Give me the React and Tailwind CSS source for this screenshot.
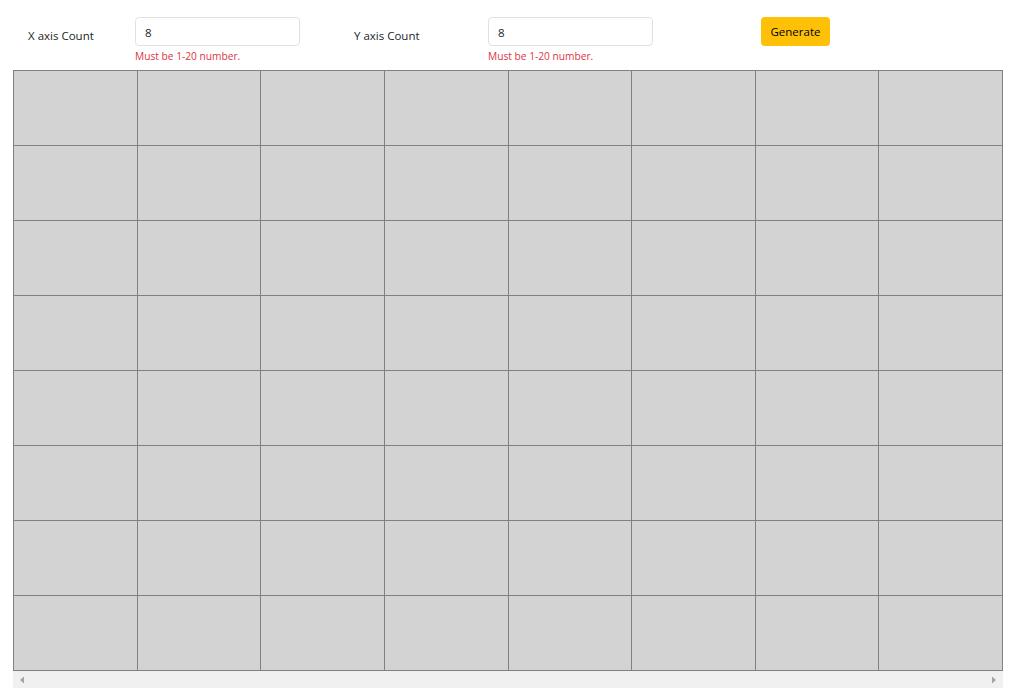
import React, { useState } from "react";

export default function App() {
  const [x, setX] = useState("8");
  const [y, setY] = useState("8");
  const cols = [...Array(8)];
  const rows = [...Array(8)];

  return (
    <div className="bg-white w-[1024px] h-[689px] overflow-hidden text-[11.5px] text-[#212529] font-['Open_Sans',sans-serif]">
      {/* Controls */}
      <div className="flex items-start pt-[17px] pl-[13px] h-[70px]">
        <div className="w-[122px] pl-[15px] pt-[11px] leading-[16px]">X axis Count</div>
        <div className="w-[165px]">
          <input
            value={x}
            onChange={(e) => setX(e.target.value)}
            className="w-full h-[29px] px-[9px] pt-[1px] border border-[#dee2e6] rounded-[4px] text-[11.5px] outline-none"
          />
          <p className="text-[#dc3545] text-[10.2px] leading-[14px] mt-[3px]">Must be 1-20 number.</p>
        </div>
        <div className="w-[134px] ml-[54px] pt-[11px] leading-[16px]">Y axis Count</div>
        <div className="w-[165px]">
          <input
            value={y}
            onChange={(e) => setY(e.target.value)}
            className="w-full h-[29px] px-[9px] pt-[1px] border border-[#dee2e6] rounded-[4px] text-[11.5px] outline-none"
          />
          <p className="text-[#dc3545] text-[10.2px] leading-[14px] mt-[3px]">Must be 1-20 number.</p>
        </div>
        <button className="ml-[108px] h-[29px] w-[69px] bg-[#ffc107] rounded-[4px] text-[11.5px] text-black">
          Generate
        </button>
      </div>

      {/* Grid */}
      <div className="ml-[13px] w-[990px]">
        <table className="w-[990px] border-collapse table-fixed">
          <tbody>
            {rows.map((_, r) => (
              <tr key={r}>
                {cols.map((_, c) => (
                  <td key={c} className="h-[75px] bg-[#d3d3d3] border border-[#808080] p-0"></td>
                ))}
              </tr>
            ))}
          </tbody>
        </table>
        {/* Horizontal scrollbar */}
        <div className="h-[17px] bg-[#f0f0f0] flex items-center justify-between px-[5px]">
          <svg width="8" height="8" viewBox="0 0 8 8">
            <path d="M2 4 L6 0.5 L6 7.5 Z" fill="#a3a3a3" />
          </svg>
          <svg width="8" height="8" viewBox="0 0 8 8">
            <path d="M6 4 L2 0.5 L2 7.5 Z" fill="#a3a3a3" />
          </svg>
        </div>
      </div>
    </div>
  );
}
